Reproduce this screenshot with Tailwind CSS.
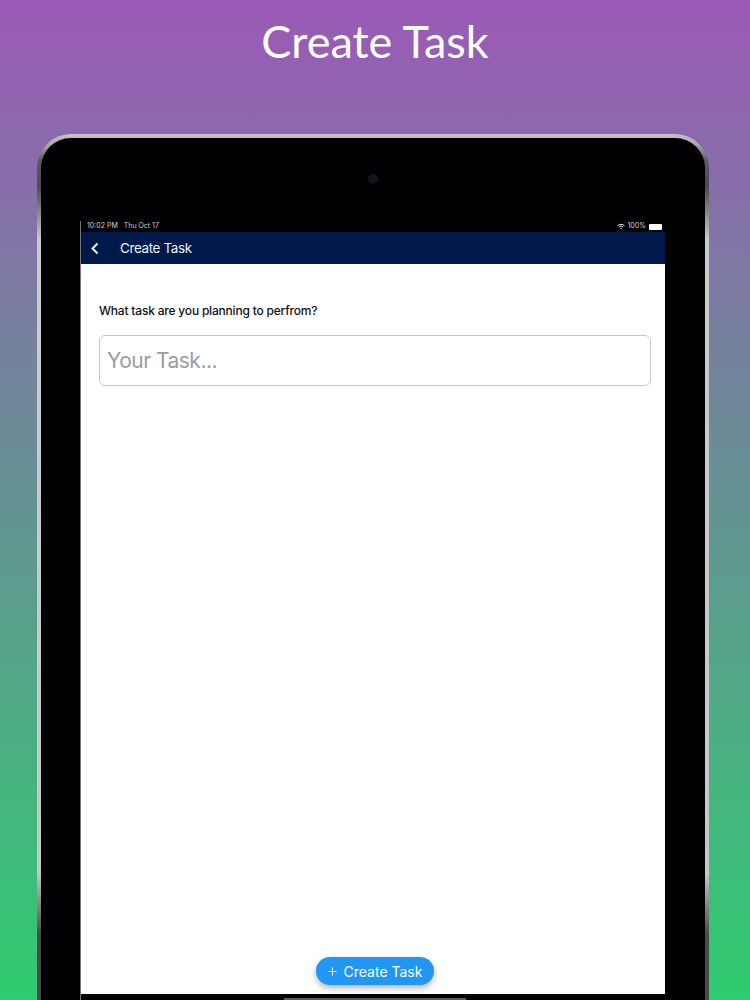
<!DOCTYPE html>
<html lang="en">
<head>
    <meta charset="UTF-8">
    <meta name="viewport" content="width=device-width, initial-scale=1.0">
    <title>Create Task</title>
    <script src="https://cdn.jsdelivr.net/npm/@tailwindcss/browser@4"></script>
</head>
<body class="h-[1000px] overflow-hidden bg-[linear-gradient(to_bottom,#9b59b6,#2fcc70)] font-['Lato',sans-serif]">
    <h1 class="h-[84px] pt-[11px] text-center text-[45px] leading-[60px] font-normal text-white">Create Task</h1>

    <!-- tablet frame -->
    <div class="ml-[37px] mt-[50px] h-[880px] w-[672px] rounded-t-[34px] bg-[linear-gradient(to_bottom,#c4c4c8_0%,#b0b0b4_1%,#5a5a60_3%,#4a4a50_6%,#c8cccc_12%,#c4c8c8_84%,#4a4a4a_91%)] px-[4px] pt-[4px]">
        <div class="relative flex h-full flex-col rounded-t-[30px] bg-[#010103] pt-[83px]">
            <div class="absolute left-[327px] top-[36px] h-[10px] w-[10px] rounded-full bg-[#10141f]"></div>

            <!-- screen -->
            <div class="ml-[39px] flex w-[585px] flex-col border-l border-[#777]">
                <div class="flex h-[11px] items-center justify-between pl-[6px] pr-[3px] font-['Inter',sans-serif] text-[7px] text-[#d0d0d0]">
                    <div class="flex gap-[6px]"><span>10:02 PM</span><span>Thu Oct 17</span></div>
                    <div class="flex items-center gap-[2px]">
                        <svg class="h-[7px] w-[8px]" viewBox="0 0 16 12" fill="none" stroke="#e5e5e5" stroke-width="2">
                            <path d="M1 4.5a10 10 0 0 1 14 0M3.5 7a6.5 6.5 0 0 1 9 0"/>
                            <path d="M6 9.5a3 3 0 0 1 4 0L8 12z" fill="#e5e5e5" stroke="none"/>
                        </svg>
                        <span>100%</span>
                        <div class="ml-[1px] h-[6px] w-[13px] rounded-[1px] bg-white"></div>
                    </div>
                </div>
                <div class="flex h-[32px] items-center bg-[#01194a] pl-[9px] font-['Inter',sans-serif] text-[13.5px] text-[#e8f0f8]">
                    <svg class="h-[13px] w-[9px]" viewBox="0 0 9 13" fill="none" stroke="#f0f4f8" stroke-width="2">
                        <path d="M7.5 1.5L2.5 6.5L7.5 11.5"/>
                    </svg>
                    <span class="ml-[21px] tracking-[-0.4px]">Create Task</span>
                </div>
                <div class="flex h-[730px] flex-col bg-white pl-[18px] pr-[14px] font-['Inter',sans-serif]">
                    <p class="mt-[38px] text-[12px] leading-[18px] font-medium tracking-[-0.2px] text-[#111]">What task are you planning to perfrom?</p>
                    <div class="mt-[15px] flex h-[51px] items-center rounded-[6px] border border-[#c8c8c8] px-[7px] text-[21px] tracking-[-0.5px] text-[#9c9c9f]">Your Task...</div>
                    <button class="mt-auto mb-[9px] flex h-[28px] w-[118px] items-center justify-center gap-[7px] self-center rounded-full bg-[#2196f3] text-[14px] text-white shadow-[0_3px_6px_rgba(0,0,0,0.3)]">
                        <svg class="h-[9px] w-[9px]" viewBox="0 0 9 9" stroke="white" stroke-width="1.1"><path d="M4.5 0.5v8M0.5 4.5h8"/></svg>
                        <span>Create Task</span>
                    </button>
                </div>
                <div class="flex h-[6px] justify-center pl-[3px] pt-[4px]">
                    <div class="h-[2px] w-[182px] bg-[#5a5a5e]"></div>
                </div>
            </div>
        </div>
    </div>
</body>
</html>
